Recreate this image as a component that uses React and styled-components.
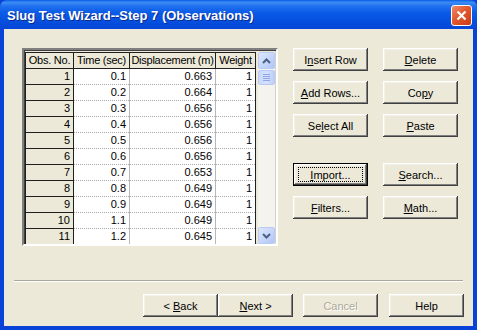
import React from 'react';
import styled, { createGlobalStyle } from 'styled-components';

// Global Styles
const GlobalStyle = createGlobalStyle`
  html, body {
    margin: 0;
    padding: 0;
    background: #ffffff;
  }
  body {
    font-family: 'Liberation Sans', Arial, sans-serif;
    font-size: 11px;
    color: #000;
  }
`;

// Window frame
const Window = styled.div`
  width: 477px;
  height: 330px;
  display: flex;
  flex-direction: column;
  box-sizing: border-box;
  background: #0842d8;
`;

const TitleBar = styled.div`
  height: 29px;
  flex: none;
  display: flex;
  align-items: center;
  justify-content: space-between;
  padding: 0 5px 0 7px;
  box-sizing: border-box;
  border-radius: 7px 7px 0 0;
  background: linear-gradient(
    to bottom,
    #0a5ce6 0%,
    #3d8cf5 8%,
    #1f6ff0 22%,
    #0b5ae6 45%,
    #0650e0 70%,
    #0546d6 100%
  );
`;

const Title = styled.span`
  color: #fff;
  font-family: 'Liberation Sans', Arial, sans-serif;
  font-weight: bold;
  font-size: 13px;
  text-shadow: 1px 1px 0 #0a2a8a;
  margin-top: 1px;
`;

const CloseButton = styled.div`
  width: 21px;
  height: 21px;
  box-sizing: border-box;
  border: 1px solid #fff;
  border-radius: 3px;
  background: linear-gradient(135deg, #f08a6a 0%, #e2582f 45%, #c83c16 100%);
  display: flex;
  align-items: center;
  justify-content: center;
  margin-top: 2px;
`;

const Client = styled.div`
  flex: 1;
  min-height: 0;
  margin: 0 4px 4px 4px;
  background: #ece9d8;
  display: flex;
  flex-direction: column;
`;

const MainRow = styled.div`
  flex: 1;
  min-height: 0;
  display: flex;
  align-items: flex-start;
  padding: 19px 0 0 18px;
`;

// Grid
const GridFrame = styled.div`
  flex: none;
  width: 256px;
  height: 198px;
  box-sizing: border-box;
  border-style: solid;
  border-width: 2px;
  border-color: #808080 #ffffff #ffffff #808080;
  box-shadow: inset 1px 1px 0 #404040, inset -1px -1px 0 #d4d0c8;
  padding: 2px 2px 2px 1px;
  display: flex;
  gap: 2px;
  overflow: hidden;
  background: #ece9d8;
`;

const Table = styled.table`
  width: 230px;
  table-layout: fixed;
  border-collapse: collapse;
  align-self: flex-start;
  font-size: 11px;
  line-height: 13px;
`;

const HeadCell = styled.th`
  height: 15px;
  padding: 0;
  font-weight: normal;
  text-align: center;
  letter-spacing: -0.25px;
  white-space: nowrap;
  overflow: hidden;
  background: #ece9d8;
  border: 1px solid #202020;
`;

const RowHead = styled.td`
  height: 15px;
  padding: 0 3px 0 0;
  text-align: right;
  background: #ece9d8;
  border: 1px solid #202020;
`;

const Cell = styled.td`
  height: 15px;
  padding: 0 3px 0 0;
  text-align: right;
  background: #fff;
  border-bottom: 1px dotted #a8a8a8;
  border-right: 1px solid #b8b8b8;
  &:last-child {
    border-right: 1px solid #202020;
  }
`;

// Scrollbar
const ScrollBar = styled.div`
  width: 17px;
  height: 192px;
  display: flex;
  flex-direction: column;
  background: #f4f3ee;
`;

const ScrollArrow = styled.div`
  width: 17px;
  height: 17px;
  flex: none;
  box-sizing: border-box;
  border: 1px solid #b8cbf5;
  border-radius: 2px;
  background: linear-gradient(135deg, #dde7fd 0%, #c3d4fb 60%, #b2c6f7 100%);
  display: flex;
  align-items: center;
  justify-content: center;
`;

const Thumb = styled.div`
  width: 17px;
  height: 15px;
  flex: none;
  margin-top: 1px;
  box-sizing: border-box;
  border: 1px solid #b8cbf5;
  border-radius: 2px;
  background: linear-gradient(90deg, #c9d8fc 0%, #d6e1fd 50%, #bccff9 100%);
  display: flex;
  flex-direction: column;
  align-items: center;
  justify-content: center;
  gap: 1px;
`;

const Grip = styled.div`
  width: 7px;
  height: 1px;
  background: #8fa8e3;
`;

const Track = styled.div`
  flex: 1;
`;

// Buttons
const ButtonPanel = styled.div`
  margin-left: 15px;
  display: flex;
  flex-direction: column;
`;

const ButtonGroup = styled.div`
  display: grid;
  grid-template-columns: 75px 75px;
  grid-auto-rows: 23px;
  column-gap: 15px;
  row-gap: 10px;
  margin-top: ${(p) => p.$offset || 0}px;
`;

const Button = styled.div`
  height: 23px;
  box-sizing: border-box;
  display: flex;
  align-items: center;
  justify-content: center;
  background: #ece9d8;
  color: ${(p) => (p.$disabled ? '#aca899' : '#000')};
  text-shadow: ${(p) => (p.$disabled ? '1px 1px 0 #fff' : 'none')};
  border: ${(p) => (p.$default ? '1px solid #000' : 'none')};
  box-shadow: inset -1px -1px 0 #404040, inset 1px 1px 0 #ffffff,
    inset -2px -2px 0 #808080, inset 2px 2px 0 #f4f2e8;
  font-size: 11px;
  white-space: pre;
  u {
    text-decoration: underline;
    text-underline-offset: 1px;
  }
`;

const FocusRing = styled.span`
  display: flex;
  align-items: center;
  justify-content: center;
  width: 65px;
  height: 15px;
  box-sizing: border-box;
  border: 1px dotted #000;
`;

const Separator = styled.div`
  flex: none;
  height: 0;
  margin: 0 10px;
  border-top: 1px solid #aca899;
  border-bottom: 1px solid #ffffff;
`;

const Footer = styled.div`
  flex: none;
  display: flex;
  justify-content: flex-end;
  padding: 12px 9px 9px 0;
`;

const FooterButton = styled(Button)`
  width: 75px;
  margin-left: ${(p) => p.$gap || 0}px;
`;

const rows = [
  [1, '0.1', '0.663', 1],
  [2, '0.2', '0.664', 1],
  [3, '0.3', '0.656', 1],
  [4, '0.4', '0.656', 1],
  [5, '0.5', '0.656', 1],
  [6, '0.6', '0.656', 1],
  [7, '0.7', '0.653', 1],
  [8, '0.8', '0.649', 1],
  [9, '0.9', '0.649', 1],
  [10, '1.1', '0.649', 1],
  [11, '1.2', '0.645', 1],
];

const Chevron = ({ up }) => (
  <svg width="9" height="6" viewBox="0 0 9 6">
    <path
      d={up ? 'M1 5 L4.5 1.5 L8 5' : 'M1 1 L4.5 4.5 L8 1'}
      fill="none"
      stroke="#4d6185"
      strokeWidth="2"
    />
  </svg>
);

const App = () => (
  <>
    <GlobalStyle />
    <Window>
      <TitleBar>
        <Title>Slug Test Wizard--Step 7 (Observations)</Title>
        <CloseButton>
          <svg width="11" height="11" viewBox="0 0 11 11">
            <path d="M1.5 1.5 L9.5 9.5 M9.5 1.5 L1.5 9.5" stroke="#fff" strokeWidth="2.2" />
          </svg>
        </CloseButton>
      </TitleBar>
      <Client>
        <MainRow>
          <GridFrame>
            <Table>
              <colgroup>
                <col style={{ width: 48 }} />
                <col style={{ width: 56 }} />
                <col style={{ width: 86 }} />
                <col style={{ width: 40 }} />
              </colgroup>
              <thead>
                <tr>
                  <HeadCell>Obs. No.</HeadCell>
                  <HeadCell>Time (sec)</HeadCell>
                  <HeadCell>Displacement (m)</HeadCell>
                  <HeadCell>Weight</HeadCell>
                </tr>
              </thead>
              <tbody>
                {rows.map(([n, t, d, w]) => (
                  <tr key={n}>
                    <RowHead>{n}</RowHead>
                    <Cell>{t}</Cell>
                    <Cell>{d}</Cell>
                    <Cell>{w}</Cell>
                  </tr>
                ))}
              </tbody>
            </Table>
            <ScrollBar>
              <ScrollArrow>
                <Chevron up />
              </ScrollArrow>
              <Thumb>
                <Grip />
                <Grip />
                <Grip />
                <Grip />
              </Thumb>
              <Track />
              <ScrollArrow>
                <Chevron />
              </ScrollArrow>
            </ScrollBar>
          </GridFrame>

          <ButtonPanel>
            <ButtonGroup>
              <Button>I<u>n</u>sert Row</Button>
              <Button><u>D</u>elete</Button>
              <Button><u>A</u>dd Rows...</Button>
              <Button>Co<u>p</u>y</Button>
              <Button>Se<u>l</u>ect All</Button>
              <Button><u>P</u>aste</Button>
            </ButtonGroup>
            <ButtonGroup $offset={26}>
              <Button $default>
                <FocusRing><u>I</u>mport...</FocusRing>
              </Button>
              <Button><u>S</u>earch...</Button>
              <Button><u>F</u>ilters...</Button>
              <Button><u>M</u>ath...</Button>
            </ButtonGroup>
          </ButtonPanel>
        </MainRow>

        <Separator />

        <Footer>
          <FooterButton>{'< '}<u>B</u>ack</FooterButton>
          <FooterButton><u>N</u>ext{' >'}</FooterButton>
          <FooterButton $gap={10} $disabled>Cancel</FooterButton>
          <FooterButton $gap={11}>Help</FooterButton>
        </Footer>
      </Client>
    </Window>
  </>
);

export default App;
